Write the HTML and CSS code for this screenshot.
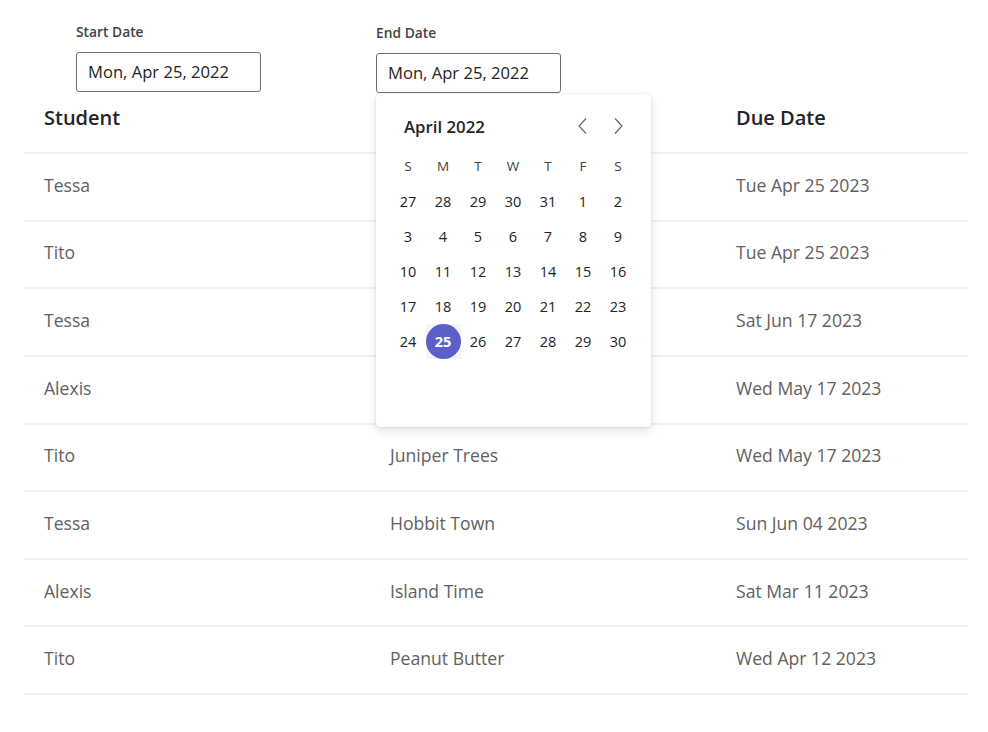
FILE: index.html
```html
<!DOCTYPE html>
<html>
<head>
<meta charset="utf-8">
<link rel="stylesheet" href="styles.css">
</head>
<body>
<div class="filters">
  <div class="field">
    <label class="field-label">Start Date</label>
    <div class="input">Mon, Apr 25, 2022</div>
  </div>
  <div class="field field-end">
    <label class="field-label">End Date</label>
    <div class="input">Mon, Apr 25, 2022</div>
    <div class="calendar">
      <div class="cal-head">
        <span class="cal-month">April 2022</span>
        <span class="cal-nav">
          <span class="nav-btn"><svg width="20" height="20" viewBox="0 0 20 20"><path d="M13 2.5 L6 10 L13 17.5" fill="none" stroke="#616161" stroke-width="1.1"/></svg></span>
          <span class="nav-btn"><svg width="20" height="20" viewBox="0 0 20 20"><path d="M7 2.5 L14 10 L7 17.5" fill="none" stroke="#616161" stroke-width="1.1"/></svg></span>
        </span>
      </div>
      <div class="cal-grid">
        <span class="wd">S</span><span class="wd">M</span><span class="wd">T</span><span class="wd">W</span><span class="wd">T</span><span class="wd">F</span><span class="wd">S</span>
        <span>27</span><span>28</span><span>29</span><span>30</span><span>31</span><span>1</span><span>2</span>
        <span>3</span><span>4</span><span>5</span><span>6</span><span>7</span><span>8</span><span>9</span>
        <span>10</span><span>11</span><span>12</span><span>13</span><span>14</span><span>15</span><span>16</span>
        <span>17</span><span>18</span><span>19</span><span>20</span><span>21</span><span>22</span><span>23</span>
        <span>24</span><span class="sel-cell"><b class="sel">25</b></span><span>26</span><span>27</span><span>28</span><span>29</span><span>30</span>
      </div>
    </div>
  </div>
</div>

<div class="table">
  <div class="row head"><div>Student</div><div></div><div>Due Date</div></div>
  <div class="row"><div>Tessa</div><div></div><div>Tue Apr 25 2023</div></div>
  <div class="row"><div>Tito</div><div></div><div>Tue Apr 25 2023</div></div>
  <div class="row"><div>Tessa</div><div></div><div>Sat Jun 17 2023</div></div>
  <div class="row"><div>Alexis</div><div></div><div>Wed May 17 2023</div></div>
  <div class="row"><div>Tito</div><div>Juniper Trees</div><div>Wed May 17 2023</div></div>
  <div class="row"><div>Tessa</div><div>Hobbit Town</div><div>Sun Jun 04 2023</div></div>
  <div class="row"><div>Alexis</div><div>Island Time</div><div>Sat Mar 11 2023</div></div>
  <div class="row"><div>Tito</div><div>Peanut Butter</div><div>Wed Apr 12 2023</div></div>
</div>
</body>
</html>
```

FILE: styles.css
```css
html, body {
  margin: 0;
  padding: 0;
  background: #ffffff;
}
body {
  font-family: "Open Sans", "Noto Sans", sans-serif;
  color: #242424;
}
.filters {
  display: flex;
  gap: 115px;
  padding: 23px 0 0 76px;
  height: 70px;
}
.field {
  width: 185px;
  display: flex;
  flex-direction: column;
}
.field-end {
  position: relative;
  padding-top: 1px;
}
.field-label {
  font-size: 13.8px;
  font-weight: 600;
  line-height: 18px;
  color: #424242;
  margin-bottom: 11px;
}
.input {
  box-sizing: border-box;
  height: 40px;
  border: 1px solid #707070;
  border-radius: 3px;
  padding: 0 11px;
  font-size: 16.6px;
  line-height: 38px;
  color: #242424;
  background: #fff;
}
.calendar {
  position: absolute;
  z-index: 2;
  left: 0;
  top: calc(100% + 1px);
  box-sizing: border-box;
  width: 275px;
  height: 333px;
  padding: 14.5px 15.5px 0 14.5px;
  background: #fff;
  border-radius: 4px;
  box-shadow: 0 4px 10px rgba(0,0,0,0.12), 0 0 2px rgba(0,0,0,0.14);
}
.cal-head {
  display: flex;
  align-items: center;
  justify-content: space-between;
  height: 35px;
  margin-bottom: 5px;
}
.cal-month {
  padding-left: 13.5px;
  font-size: 16.8px;
  font-weight: 600;
  color: #242424;
}
.cal-nav {
  display: flex;
}
.nav-btn {
  width: 35px;
  height: 35px;
  display: flex;
  align-items: center;
  justify-content: center;
}
.cal-grid {
  display: grid;
  grid-template-columns: repeat(7, 35px);
  grid-auto-rows: 35px;
}
.cal-grid span {
  display: flex;
  align-items: center;
  justify-content: center;
  font-size: 14.5px;
  color: #242424;
}
.cal-grid .wd {
  font-size: 13.5px;
  color: #424242;
}
.cal-grid .sel-cell {
  background: #f5f5f5;
}
.sel {
  width: 35px;
  height: 35px;
  border-radius: 50%;
  background: #5b5fc7;
  color: #fff;
  font-weight: 700;
  font-size: 14.5px;
  display: flex;
  align-items: center;
  justify-content: center;
}
.table {
  margin: 0 20px 0 24px;
}
.row {
  box-sizing: border-box;
  display: grid;
  grid-template-columns: 346px 346px 1fr;
  align-items: center;
  height: 67.625px;
  padding-bottom: 4px;
  border-bottom: 2px solid #f0f0f0;
  font-size: 17.6px;
  color: #616161;
}
.row > div {
  padding-left: 20px;
}
.row.head {
  height: 61px;
  padding-bottom: 10px;
  font-size: 20px;
  font-weight: 600;
  color: #242424;
}
```
